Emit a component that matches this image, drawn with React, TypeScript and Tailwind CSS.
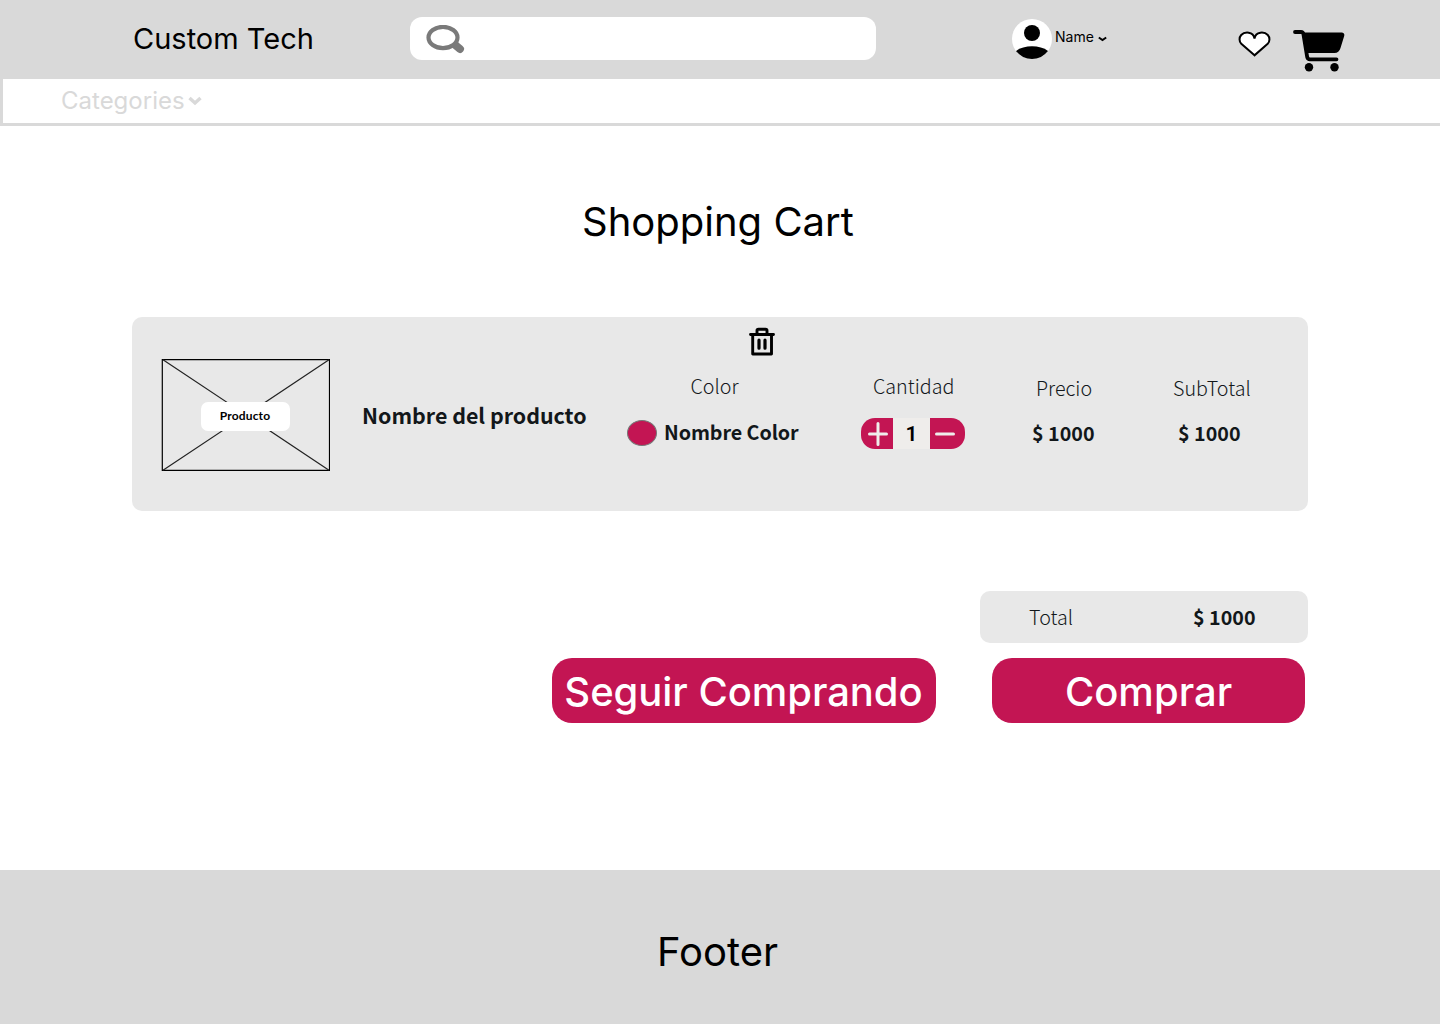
import type { ReactNode } from "react";

const SANS = "font-['Inter',sans-serif] whitespace-nowrap";
const SOURCE = "font-['Noto_Sans_CJK_SC',sans-serif] whitespace-nowrap text-[#12171a]";

function Label({ children, className = "" }: { children: ReactNode; className?: string }) {
  return <span className={`${SOURCE} block text-[19.7px] leading-7 font-light ${className}`}>{children}</span>;
}

function Value({ children, className = "" }: { children: ReactNode; className?: string }) {
  return <span className={`${SOURCE} block text-[19.7px] leading-7 font-bold ${className}`}>{children}</span>;
}

function Header() {
  return (
    <header className="flex h-[79px] items-start bg-[#d9d9d9]">
      <span className={`${SANS} ml-[133px] mt-[19px] w-[277px] text-[29px] leading-10`}>Custom Tech</span>
      <div className="mt-[17px] h-[43px] w-[466px] rounded-[12px] bg-white">
        <svg className="ml-[16px] mt-[8px] h-[29px] w-[39px]" viewBox="0 0 39 29" fill="none" stroke="#7a7a7a">
          <path d="M28 19 34 24" strokeWidth="8" strokeLinecap="round" />
          <ellipse cx="17" cy="12.500" rx="14.500" ry="10.600" fill="#fff" strokeWidth="4.200" />
        </svg>
      </div>
      <div className="ml-[136px] mt-[19px] flex items-start">
        <svg className="size-10" viewBox="0 0 40 40">
          <circle cx="20" cy="20" r="20" fill="#fff" />
          <circle cx="20" cy="14" r="8" />
          <path d="M4 32C12 25.800 28 25.800 36 32A20 20 0 0 1 4 32Z" />
        </svg>
        <span className={`${SANS} ml-[3px] mt-[8px] w-[43px] text-[14px] leading-5`}>Name</span>
        <svg className="mt-[17px] h-[6px] w-[9px]" viewBox="0 0 9 6" fill="none" stroke="#000" strokeWidth="2">
          <path d="M.8 1.500 4.500 4 8.200 1.500" />
        </svg>
      </div>
      <svg className="ml-[131px] mt-[31px] h-[26px] w-[34px]" viewBox="0 0 34 26" fill="#fff" stroke="#000" strokeWidth="2">
        <path d="M16.500 24.300 3.300 12.800C1 10.500 1 6.400 3.200 4 6.500.500 15.300.100 16.500 7.500 17.700.100 26.500.500 29.800 4 32 6.400 32 10.500 29.700 12.800Z" />
      </svg>
      <svg className="ml-[21px] mt-[29px] h-[43px] w-[52px]" viewBox="0 0 52 43">
        <path d="M2 3H8Q10 3 10.400 5L14.200 28Q14.800 30.300 17 30.300H43.500" fill="none" stroke="#000" strokeWidth="3.800" strokeLinecap="round" />
        <path d="M9 3.500H49Q52 4 51.200 7L47.500 19Q46 24 41.500 24H14Z" />
        <circle cx="16" cy="38.300" r="4.200" />
        <circle cx="41.500" cy="38.300" r="4.200" />
      </svg>
    </header>
  );
}

function CategoryBar() {
  return (
    <nav className="flex h-[47px] items-start border-b-3 border-l-3 border-[#d9d9d9] bg-white text-[#d9d9d9]">
      <span className={`${SANS} ml-[58px] mt-[6px] w-[127px] text-[24px] leading-8`}>Categories</span>
      <svg className="mt-[17px] h-[10px] w-[14px]" viewBox="0 0 14 10" fill="none" stroke="currentColor" strokeWidth="3.400">
        <path d="M1.500 2 7 7 12.500 2" />
      </svg>
    </nav>
  );
}

function ProductImage() {
  return (
    <div className="ml-[29px] mt-[42px] grid h-[112px] w-[169px] shrink-0 place-items-center">
      <svg className="col-start-1 row-start-1 size-full" viewBox="0 0 169 112" fill="none" stroke="#000">
        <path d="M1.300 .6H168.500V111.400H1.300Z" strokeWidth="1.200" />
        <path d="M2 .8 168 111.200M168 .8 2 111.200" stroke="#222" strokeWidth="1.200" />
      </svg>
      <span className="z-10 col-start-1 row-start-1 mt-[3px] mr-[1px] flex h-[29px] w-[89px] justify-center rounded-[7px] bg-white pt-[5px] font-['Lato',sans-serif] text-[12px] leading-[18px] font-bold tracking-[0.15px]">
        Producto
      </span>
    </div>
  );
}

function QuantityStepper() {
  return (
    <div className="flex h-[31px] w-[104px] overflow-hidden rounded-[14px] bg-[#c31553]">
      <button className="grid w-8 place-items-center" aria-label="+">
        <svg className="ml-[2px] h-6 w-5" viewBox="0 0 20 24" stroke="#efedeb" strokeWidth="3" strokeLinecap="round">
          <path d="M10 1.500V22.500M1.500 12H18.500" />
        </svg>
      </button>
      <span className="w-[37px] bg-[#efedeb] text-center font-['Roboto',sans-serif] text-[21px] leading-[33px] font-semibold">1</span>
      <button className="grid w-[35px] place-items-center" aria-label="-">
        <svg className="mr-[5px] h-6 w-5" viewBox="0 0 20 24" stroke="#efedeb" strokeWidth="3" strokeLinecap="round">
          <path d="M1.500 12H18.500" />
        </svg>
      </button>
    </div>
  );
}

function TrashIcon() {
  return (
    <svg className="ml-[122px] h-[30px] w-[26px]" viewBox="0 0 26 30" fill="none" stroke="#000" strokeLinecap="round" strokeLinejoin="round">
      <path d="M1.500 7.500H24.500M3.700 8V27H22.500V8M8 7V3.500Q8 2.300 9.500 2.300H16.500Q18 2.300 18 3.500V7" strokeWidth="2.900" />
      <path d="M10 13.200V21.200M16 13.200V21.200" strokeWidth="3.200" />
    </svg>
  );
}

function CartItem() {
  return (
    <article className="flex h-[194px] items-start rounded-[10px] bg-[#e8e8e8]">
      <ProductImage />
      <h2 className={`${SOURCE} ml-[32px] mt-[82px] w-[265px] text-[21.4px] leading-8 font-bold`}>Nombre del producto</h2>
      <div className="w-[234px] pt-[10px]">
        <TrashIcon />
        <Label className="ml-[63.5px] mt-[15px]">Color</Label>
        <div className="mt-[18px] flex items-center">
          <span className="mt-[2px] h-[26px] w-[30px] rounded-[50%] border border-[#777] bg-[#c31553]" />
          <Value className="ml-[7px] tracking-[-0.06px]">Nombre Color</Value>
        </div>
      </div>
      <div className="w-[171px] pt-[55px]">
        <Label className="mb-[18px] ml-[12px]">Cantidad</Label>
        <QuantityStepper />
      </div>
      <div className="w-[141px] pt-[57px]">
        <Label className="ml-[4px]">Precio</Label>
        <Value className="mt-[17px]">$ 1000</Value>
      </div>
      <div className="pt-[57px]">
        <Label>SubTotal</Label>
        <Value className="ml-[5px] mt-[17px]">$ 1000</Value>
      </div>
    </article>
  );
}

function ActionButton({ children, className }: { children: ReactNode; className: string }) {
  return (
    <button className={`${SANS} h-[65px] rounded-[20px] bg-[#c31553] text-[40px] leading-[67px] font-medium text-white ${className}`}>
      {children}
    </button>
  );
}

export default function App() {
  return (
    <div className="flex h-[1024px] w-[1440px] flex-col overflow-hidden bg-white text-black">
      <Header />
      <CategoryBar />
      <main className="flex grow flex-col px-[132px]">
        <h1 className={`${SANS} ml-[450px] mt-[72px] text-[40px] leading-12`}>Shopping Cart</h1>
        <div className="mt-[71px]">
          <CartItem />
        </div>
        <div className="mt-20 ml-auto flex h-[52px] w-[328px] rounded-[10px] bg-[#e8e8e8] pt-[12px]">
          <Label className="ml-[49px] w-[164px]">Total</Label>
          <Value>$ 1000</Value>
        </div>
        <div className="mt-[15px] mr-[3px] flex justify-end gap-14">
          <ActionButton className="w-[384px] pr-[1px] tracking-[-0.05px]">Seguir Comprando</ActionButton>
          <ActionButton className="w-[313px]">Comprar</ActionButton>
        </div>
      </main>
      <footer className="h-[154px] bg-[#d9d9d9] pt-[58px] pl-[657px]">
        <span className={`${SANS} block text-[40px] leading-12`}>Footer</span>
      </footer>
    </div>
  );
}
